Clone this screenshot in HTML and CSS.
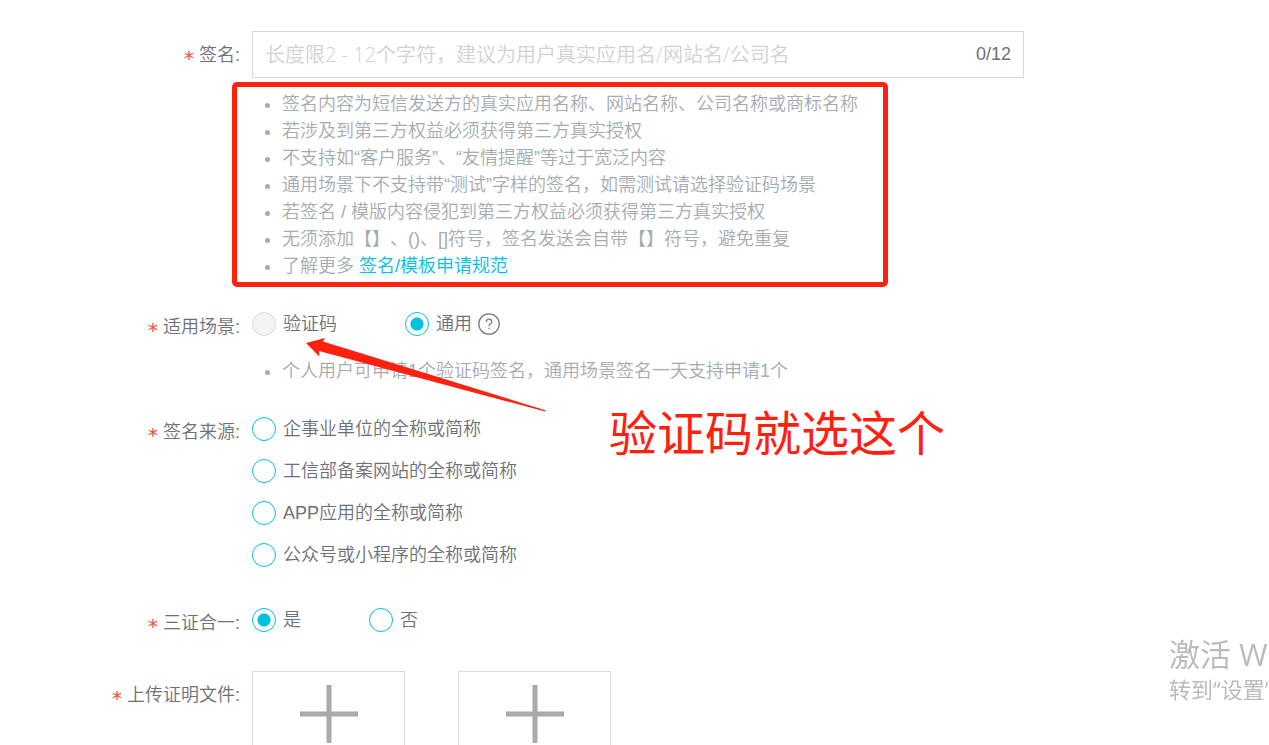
FILE: index.html
```html
<!DOCTYPE html>
<html lang="zh-CN">
<head>
    <meta charset="UTF-8">
    <meta name="viewport" content="width=device-width, initial-scale=1.0">
    <title>签名</title>
    <link rel="stylesheet" href="styles.css">
</head>
<body>

    <form class="sign-form">
        <div class="row">
            <label class="row-label" for="signName"><span class="required">*</span>签名:</label>
            <div class="row-content">
                <div class="input-box">
                    <input type="text" id="signName" maxlength="12" placeholder="长度限2 - 12个字符，建议为用户真实应用名/网站名/公司名">
                    <span class="counter">0/12</span>
                </div>
                <ul class="tips marked">
                    <li>签名内容为短信发送方的真实应用名称、网站名称、公司名称或商标名称</li>
                    <li>若涉及到第三方权益必须获得第三方真实授权</li>
                    <li>不支持如“客户服务”、“友情提醒”等过于宽泛内容</li>
                    <li>通用场景下不支持带“测试”字样的签名，如需测试请选择验证码场景</li>
                    <li>若签名 / 模版内容侵犯到第三方权益必须获得第三方真实授权</li>
                    <li>无须添加【】、()、[]符号，签名发送会自带【】符号，避免重复</li>
                    <li>了解更多 <a href="#">签名/模板申请规范</a></li>
                </ul>
            </div>
        </div>

        <div class="row" role="radiogroup" aria-labelledby="sceneLabel">
            <span class="row-label" id="sceneLabel"><span class="required">*</span>适用场景:</span>
            <div class="row-content">
                <div class="options">
                    <label class="option"><input type="radio" name="scene" disabled>验证码</label>
                    <div class="option-help">
                        <label class="option"><input type="radio" name="scene" checked>通用</label>
                        <svg class="help-icon" viewBox="0 0 22 22" aria-hidden="true">
                            <circle cx="11" cy="11" r="10.2"/>
                            <path d="M8.3 9.1V8.6Q8.3 6.2 11 6.2T13.7 8.7Q13.7 10 12.4 10.8T11.1 12.7V13.2M11.1 14.8V16.2"/>
                        </svg>
                    </div>
                </div>
                <ul class="tips">
                    <li>个人用户可申请1个验证码签名，通用场景签名一天支持申请1个</li>
                </ul>
                <!-- Arrow pointing at the first option -->
                <svg class="arrow" viewBox="0 0 242 74" aria-hidden="true">
                    <path d="M1 5L20 0L18 3.5L241 72.5L240 73.5L14 13L14.5 18.5Z"/>
                </svg>
                <p class="note">验证码就选这个</p>
            </div>
        </div>

        <div class="row" role="radiogroup" aria-labelledby="sourceLabel">
            <span class="row-label" id="sourceLabel"><span class="required">*</span>签名来源:</span>
            <div class="row-content options vertical">
                <label class="option"><input type="radio" name="source">企事业单位的全称或简称</label>
                <label class="option"><input type="radio" name="source">工信部备案网站的全称或简称</label>
                <label class="option"><input type="radio" name="source">APP应用的全称或简称</label>
                <label class="option"><input type="radio" name="source">公众号或小程序的全称或简称</label>
            </div>
        </div>

        <div class="row" role="radiogroup" aria-labelledby="mergeLabel">
            <span class="row-label" id="mergeLabel"><span class="required">*</span>三证合一:</span>
            <div class="row-content options">
                <label class="option"><input type="radio" name="merge" checked>是</label>
                <label class="option"><input type="radio" name="merge">否</label>
            </div>
        </div>

        <div class="row upload-row">
            <span class="row-label" id="uploadLabel"><span class="required">*</span>上传证明文件:</span>
            <div class="row-content uploads">
                <button type="button" class="upload" aria-labelledby="uploadLabel">
                    <svg viewBox="0 0 60 60" aria-hidden="true"><path d="M1 30H59M30 1V59"/></svg>
                </button>
                <button type="button" class="upload" aria-labelledby="uploadLabel">
                    <svg viewBox="0 0 60 60" aria-hidden="true"><path d="M1 30H59M30 1V59"/></svg>
                </button>
            </div>
        </div>
    </form>

    <!-- System watermark, runs off the right edge -->
    <div class="watermark">
        <p class="watermark-title">激活 W</p>
        <p>转到“设置”</p>
    </div>

</body>
</html>
```
FILE: styles.css
```css
* {
    box-sizing: border-box;
}

html {
    height: 100%;
    overflow: hidden;
}

body {
    margin: 0;
    height: 100%;
    overflow: hidden;
    background-color: #fff;
    color: #6d7176;
    font-family: "Liberation Sans", "Noto Sans CJK SC", sans-serif;
    font-size: 18px;
    font-weight: 350;
    line-height: 27px;
    text-spacing-trim: space-all;
}

p, ul {
    margin: 0;
    padding: 0;
}

.sign-form {
    display: flex;
    flex-direction: column;
    gap: 23px;
    max-width: 1024px;
    padding-top: 31px;
}

.row {
    display: grid;
    grid-template-columns: 240px 1fr;
    column-gap: 12px;
}

.row-label {
    display: flex;
    justify-content: flex-end;
    align-items: flex-start;
    gap: 5px;
    padding-top: 11px;
}

.row-content {
    position: relative;
    min-width: 0;
}

.required {
    color: #f04848;
    font-family: "DejaVu Sans", sans-serif;
    font-size: 20px;
    font-weight: 400;
    padding-top: 3px;
}

/* Text box with counter */
.input-box {
    display: flex;
    align-items: center;
    height: 47px;
    padding: 0 12px;
    border: 1px solid #d8d8d8;
}

.input-box input {
    flex: 1;
    min-width: 0;
    padding: 0;
    border: none;
    outline: none;
    color: inherit;
    font-family: "Open Sans", "Noto Sans CJK SC", sans-serif;
    font-size: 20px;
    font-weight: 350;
}

.input-box input::placeholder {
    color: #d0d2d4;
    opacity: 1;
}

/* Hint lists */
.tips {
    position: relative;
    margin-top: 13px;
    padding-left: 30px;
    color: #a5acb0;
    list-style: none;
}

.tips li::before {
    content: "";
    float: left;
    width: 5px;
    height: 5px;
    margin: 12px 0 0 -17px;
    border-radius: 50%;
    background-color: #a5acb0;
}

.tips a {
    color: #00c1de;
    text-decoration: none;
}

.marked::after {
    content: "";
    position: absolute;
    top: -9px;
    left: -20px;
    box-sizing: border-box;
    width: 656px;
    height: 205px;
    border: 5px solid #ff2010;
    border-radius: 5px;
    pointer-events: none;
}

/* Radio options */
.options {
    display: flex;
    gap: 68px;
}

.options.vertical {
    flex-direction: column;
    gap: 0;
}

.option {
    display: flex;
    align-items: center;
    gap: 7px;
    height: 42px;
}

.option input {
    appearance: none;
    width: 24px;
    height: 24px;
    margin: 0;
    border: 1px solid #00c1de;
    border-radius: 50%;
    background-color: #fff;
}

.option input:checked {
    background-image: radial-gradient(circle, #00c1de 6px, transparent 7px);
}

.option input:disabled {
    border-color: #dcdcdc;
    background-color: #f4f4f4;
}

.option-help {
    display: flex;
    align-items: center;
    gap: 6px;
}

.help-icon {
    width: 22px;
    height: 22px;
    fill: none;
    stroke: #777b80;
    stroke-width: 1.3;
}

/* Red annotations */
.arrow {
    position: absolute;
    top: 35px;
    left: 53px;
    width: 242px;
    height: 74px;
    fill: #ff2010;
}

.note {
    position: absolute;
    top: 96px;
    left: 357px;
    color: #ff2010;
    font-size: 48px;
    font-weight: 400;
    line-height: 72px;
    white-space: nowrap;
}

/* Upload boxes */
.upload-row {
    padding-top: 7px;
}

.uploads {
    display: flex;
    gap: 53px;
}

.upload {
    width: 153px;
    height: 153px;
    padding: 12px 0 0;
    border: 1px solid #dcdcdc;
    background-color: #fff;
    display: flex;
    justify-content: center;
    align-items: flex-start;
}

.upload svg {
    width: 60px;
    height: 60px;
    fill: none;
    stroke: #aaa;
    stroke-width: 5;
}

.watermark {
    position: fixed;
    right: 0;
    top: 633px;
    width: 100px;
    overflow: hidden;
    color: #bbb;
    font-family: "Open Sans", "Noto Sans CJK SC", sans-serif;
    font-size: 22px;
    font-weight: 400;
    white-space: nowrap;
}

.watermark-title {
    font-size: 31px;
    line-height: 43px;
}
```
